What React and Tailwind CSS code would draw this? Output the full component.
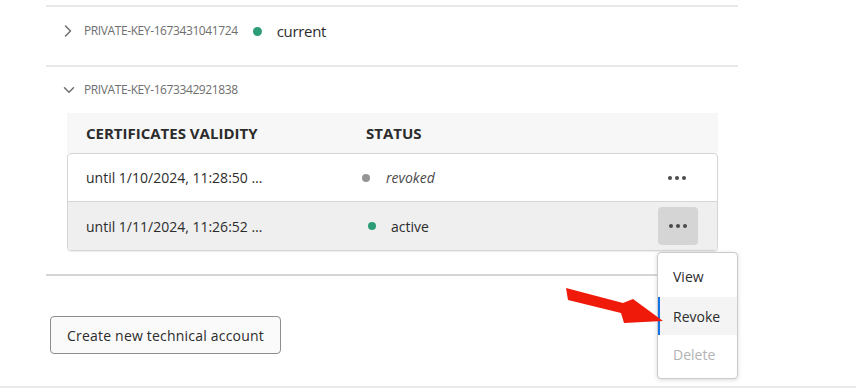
import { ChevronRight, ChevronDown } from 'lucide-react'

const font = { fontFamily: '"Open Sans", "Noto Sans", sans-serif' }

function Dots() {
  return (
    <span className="flex items-center gap-[3px]">
      <span className="w-[4px] h-[4px] rounded-full bg-[#4b4b4b]" />
      <span className="w-[4px] h-[4px] rounded-full bg-[#4b4b4b]" />
      <span className="w-[4px] h-[4px] rounded-full bg-[#4b4b4b]" />
    </span>
  )
}

export default function App() {
  return (
    <div className="relative w-[856px] h-[389px] bg-white overflow-hidden" style={font}>
      <div className="pt-[5px] pl-[46px] w-[738px]">
        {/* key 1 */}
        <div className="border-t-2 border-[#e8e8e8] h-[60px] pt-[14px] flex items-start">
          <div className="h-[20px] flex items-center">
            <ChevronRight size={20} strokeWidth={1.8} className="ml-[12px] text-[#6e6e6e]" />
            <span className="ml-[6px] text-[12px] text-[#6e6e6e] tracking-[-0.4px]">PRIVATE-KEY-1673431041724</span>
            <span className="ml-[15px] w-[9px] h-[9px] rounded-full bg-[#2d9d78]" />
            <span className="ml-[15px] text-[15px] text-[#2c2c2c] tracking-[-0.3px]">current</span>
          </div>
        </div>

        {/* key 2 */}
        <div className="border-t-2 border-[#e8e8e8] border-b-2 border-b-[#d5d5d5] pb-[23px]">
          <div className="h-[46px] flex items-center">
            <ChevronDown size={18} strokeWidth={2} className="ml-[14px] text-[#6e6e6e]" />
            <span className="ml-[6px] text-[12px] text-[#6e6e6e] tracking-[-0.4px]">PRIVATE-KEY-1673342921838</span>
          </div>
          <div className="ml-[21px] mr-[20px]">
            <div className="h-[40px] bg-[#f7f7f7] flex items-center text-[15px] font-bold text-[#2c2c2c]">
              <span className="ml-[19px] w-[280px]">CERTIFICATES VALIDITY</span>
              <span>STATUS</span>
            </div>
            <div className="border border-[#d5d5d5] rounded-[4px] overflow-hidden shadow-[0_1px_1px_rgba(0,0,0,0.08)]">
              <div className="h-[48px] flex items-center text-[14px] text-[#2c2c2c] border-b border-[#d5d5d5]">
                <span className="ml-[18px] w-[276px]">until 1/10/2024, 11:28:50 …</span>
                <span className="w-[8px] h-[8px] rounded-full bg-[#959595]" />
                <span className="ml-[16px] italic text-[#4b4b4b]">revoked</span>
                <span className="ml-auto mr-[31px]"><Dots /></span>
              </div>
              <div className="h-[48px] flex items-center text-[14px] text-[#2c2c2c] bg-[#efefef]">
                <span className="ml-[18px] w-[282px]">until 1/11/2024, 11:26:52 …</span>
                <span className="w-[8px] h-[8px] rounded-full bg-[#2d9d78]" />
                <span className="ml-[15px]">active</span>
                <span className="ml-auto mr-[19px] w-[40px] h-[38px] rounded-[4px] bg-[#d5d5d5] flex items-center justify-center"><Dots /></span>
              </div>
            </div>
          </div>
        </div>
      </div>

      <div className="pl-[50px] pt-[40px]">
        <button className="w-[231px] h-[38px] border border-[#8e8e8e] rounded-[4px] bg-[#fafafa] text-[14px] text-[#2c2c2c] tracking-[0.2px]">
          Create new technical account
        </button>
      </div>

      <div className="absolute left-0 right-0 top-[386px] border-t-2 border-[#eaeaea]" />

      {/* menu */}
      <div className="absolute left-[657px] top-[252px] w-[81px] h-[127px] bg-white border border-[#cacaca] rounded-[4px] shadow-[0_1px_4px_rgba(0,0,0,0.15)] py-[3px] text-[14px]">
        <div className="h-[41px] flex items-center pl-[15px] text-[#2c2c2c]">View</div>
        <div className="h-[38px] flex items-center pl-[13px] text-[#2c2c2c] bg-[#f4f4f4] border-l-2 border-[#1473e6]">Revoke</div>
        <div className="h-[39px] flex items-center pl-[15px] text-[#b3b3b3]">Delete</div>
      </div>

      {/* arrow */}
      <svg className="absolute left-0 top-0" width="856" height="389" viewBox="0 0 856 389">
        <polygon points="566,288 623,303 633,299 663,321 624,323 621,313 568,300" fill="#f01a0a" />
      </svg>
    </div>
  )
}
